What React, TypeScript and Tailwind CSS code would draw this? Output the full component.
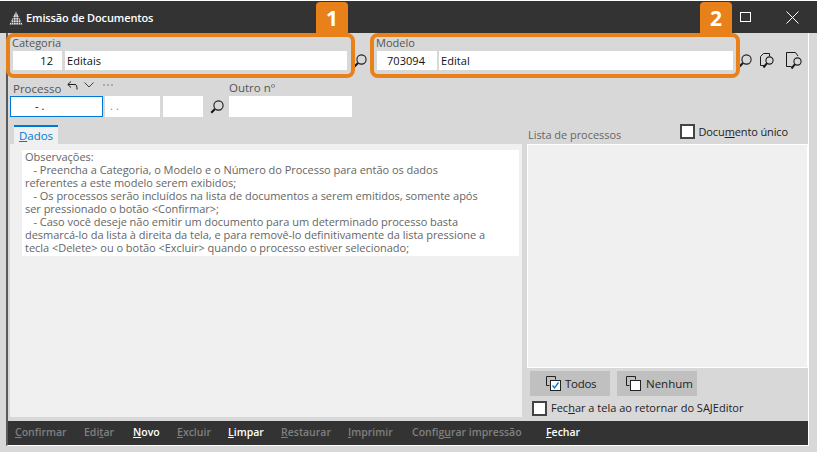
import React from "react";

const Search = ({ className = "" }: { className?: string }) => (
  <svg viewBox="0 0 14 14" className={`w-[14px] h-[14px] ${className}`} fill="none" stroke="#1a1a1a">
    <circle cx="8.5" cy="5.5" r="4.6" strokeWidth="1.1" />
    <path d="M5 9 L1.2 12.8" strokeWidth="2.2" />
  </svg>
);

const Field = ({ w, label, align }: { w: string; label?: string; align?: string }) => (
  <div className={`${w} ${align ?? ""} h-[19px] bg-white flex items-center px-[2px] text-[11px] tracking-[0.05px] text-[#111] leading-none`}>
    {label}
  </div>
);

const Check = () => <div className="w-[15px] h-[15px] bg-white border-2 border-[#444] shrink-0" />;

const Item = ({ on, className, before, u, after }: { on?: boolean; className: string; before?: string; u: string; after: string }) => (
  <span className={`${className} font-semibold whitespace-nowrap ${on ? "text-white" : "text-[#808080]"}`}>
    {before}
    <span className="underline">{u}</span>
    {after}
  </span>
);

const lines = [
  "Observações:",
  "   - Preencha a Categoria, o Modelo e o Número do Processo para então os dados",
  "referentes a este modelo serem exibidos;",
  "   - Os processos serão incluídos na lista de documentos a serem emitidos, somente após",
  "ser pressionado o botão <Confirmar>;",
  "   - Caso você deseje não emitir um documento para um determinado processo basta",
  "desmarcá-lo da lista à direita da tela, e para removê-lo definitivamente da lista pressione a",
  "tecla <Delete> ou o botão <Excluir> quando o processo estiver selecionado;",
];

export default function App() {
  return (
    <div className="relative w-[817px] h-[452px] overflow-hidden bg-[#d8d8d8] flex flex-col font-['Open_Sans','Noto_Sans',sans-serif] text-[11px]">
      <div className="h-px bg-white shrink-0" />
      <div className="h-[32px] shrink-0 bg-[#333333] flex items-center pl-[9px] text-white">
        <svg viewBox="0 0 14 14" className="w-[14px] h-[14px] mt-[2px]">
          <path d="M7 0.5 L13.5 13.5 H0.5 Z" fill="#e4e4e4" />
          <path d="M7 1V13.5M4.5 6V13.5M9.5 6V13.5M2.5 10V13.5M11.5 10V13.5M1 11.5H13M2.5 9H11.5M4 6.5H10" stroke="#333" strokeWidth="0.6" />
        </svg>
        <span className="ml-[3px] mt-[2px] font-semibold text-[11px] tracking-[-0.12px]">Emissão de Documentos</span>
        <div className="ml-auto w-[11px] h-[10px] border border-white mr-[35px]" />
        <svg viewBox="0 0 13 13" className="w-[13px] h-[13px] mr-[18px]" stroke="#fff" strokeWidth="1">
          <path d="M0.5 0.5L12.5 12.5M12.5 0.5L0.5 12.5" />
        </svg>
      </div>

      <div className="flex-1 ml-[6px] mr-[8px] mb-[6px] border-l-2 border-l-[#5a5a5a] border-r border-r-white border-b border-b-white flex flex-col min-h-0">
        {/* first row */}
        <div className="flex items-end h-[37px] pl-[5px] text-[#444]">
          <div className="w-[334px] shrink-0">
            <div className="text-[11px] leading-[13px] mb-[2px] text-[#555] -ml-px">Categoria</div>
            <div className="flex gap-[3px]">
              <Field w="w-[49px]" label="12" align="justify-end pr-[9px]" />
              <Field w="w-[282px]" label="Editais" />
            </div>
          </div>
          <Search className="ml-[6px] mb-[2px] shrink-0" />
          <div className="ml-[10px] w-[356px] shrink-0">
            <div className="text-[11px] leading-[13px] mb-[2px] text-[#555] -ml-px">Modelo</div>
            <div className="flex gap-[2px]">
              <Field w="w-[60px]" label="703094" align="justify-end pr-[12px]" />
              <Field w="w-[294px]" label="Edital" />
            </div>
          </div>
          <Search className="ml-[5px] mb-[2px] shrink-0" />
          <svg viewBox="0 0 17 18" className="w-[17px] h-[18px] ml-[7px] shrink-0" fill="none" stroke="#1a1a1a">
            <path d="M5.5 13.5H1.5V4.5L4.5 1.5H10.5V4" strokeWidth="1" />
            <circle cx="10.5" cy="8.5" r="3.6" strokeWidth="1.1" />
            <path d="M8 11.2L4.5 15.5" strokeWidth="2" />
          </svg>
          <svg viewBox="0 0 17 18" className="w-[17px] h-[18px] ml-[10px] shrink-0" fill="none" stroke="#1a1a1a">
            <path d="M5.5 14.5H0.5V0.5H9.5L12 4" strokeWidth="1" />
            <circle cx="11.5" cy="9.5" r="3.6" strokeWidth="1.1" />
            <path d="M9 12.2L5.5 16.5" strokeWidth="2" />
          </svg>
        </div>

        {/* second row */}
        <div className="flex items-end h-[47px] pl-[2px] shrink-0">
          <div className="w-[195px] shrink-0">
            <div className="flex items-center h-[15px] pl-[3px]">
              <span className="text-[11.5px] text-[#555] mt-[2px]">Processo</span>
              <svg viewBox="0 0 11 9" className="w-[11px] h-[9px] ml-[6px] -mt-[5px]" fill="none" stroke="#1a1a1a" strokeWidth="1">
                <path d="M4 0.5L0.8 3.5L4 6.5M1 3.5H8C9.5 3.5 10 5 10 8.5" />
              </svg>
              <svg viewBox="0 0 10 6" className="w-[10px] h-[6px] ml-[6px] -mt-[5px]" fill="none" stroke="#1a1a1a" strokeWidth="0.8">
                <path d="M0.5 0.5L5 5L9.5 0.5" />
              </svg>
              <span className="ml-[9px] -mt-[5px] flex gap-[2px]">
                <i className="w-[2px] h-[2px] bg-[#aaa]" />
                <i className="w-[2px] h-[2px] bg-[#aaa]" />
                <i className="w-[2px] h-[2px] bg-[#aaa]" />
              </span>
            </div>
            <div className="flex gap-[2px] h-[21px] mt-px">
              <div className="w-[93px] bg-white border border-[#0078d7] flex items-center pl-[24px] text-[11px] text-[#111]">-&nbsp;.</div>
              <div className="w-[55px] bg-white flex items-center pl-[5px] text-[11px] text-[#8a8a8a] tracking-[3px] mr-px">..</div>
              <div className="w-[40px] bg-white" />
            </div>
          </div>
          <Search className="ml-[5px] mb-[3px] shrink-0" />
          <div className="ml-[5px] w-[123px]">
            <div className="h-[15px] mb-px text-[11.5px] text-[#555] leading-[14px] pt-[1px]">Outro nº</div>
            <div className="h-[21px] bg-white" />
          </div>
        </div>

        {/* body */}
        <div className="flex-1 flex min-h-0 mt-[8px] pl-[2px]">
          <div className="w-[512px] shrink-0 flex flex-col">
            <div className="ml-[4px] w-[44px] h-[19px] bg-[#f0f0f0] border-t-2 border-t-[#0078d7] flex items-center justify-center text-[#0078d7] text-[11.5px] leading-none">
              <span><span className="underline">D</span>ados</span>
            </div>
            <div className="h-[273px] bg-[#f0f0f0] pt-[6px] px-[12px] pr-[3px]">
              <div className="bg-white h-[106px] pl-[3px] text-[11px] leading-[13px] text-[#666] tracking-[-0.03px] whitespace-pre">
                {lines.map((l) => (
                  <div key={l}>{l}</div>
                ))}
              </div>
            </div>
          </div>
          <div className="ml-[5px] flex-1 flex flex-col">
            <div className="h-[19px] flex items-end relative">
              <span className="text-[#666] leading-[14px] mb-[2px] ml-px tracking-[-0.05px]">Lista de processos</span>
              <div className="ml-auto mr-[20px] mb-[4px] flex items-center text-[#222] gap-[4px]">
                <Check />
                <span className="tracking-[-0.12px]">Docu<span className="underline">m</span>ento único</span>
              </div>
            </div>
            <div className="h-[224px] bg-[#f0f0f0] border border-white" />
            <div className="flex gap-[7px] mt-[3px] ml-[3px]">
              <div className="w-[80px] h-[25px] bg-[#c0c0c0] flex items-center pl-[16px] gap-[4px] text-[#222] text-[11.5px]">
                <svg viewBox="0 0 15 15" className="w-[15px] h-[15px]" fill="none" stroke="#222">
                  <path d="M9.5 3.5V0.5H0.5V9.5H3.5" />
                  <rect x="4.5" y="4.5" width="10" height="10" fill="#fff" />
                  <path d="M6.5 9.5L8.5 12L12.5 6.5" stroke="#0078d7" strokeWidth="1.3" />
                </svg>
                <span className="tracking-[-0.3px]">Todos</span>
              </div>
              <div className="w-[80px] h-[25px] bg-[#c0c0c0] flex items-center pl-[9px] gap-[5px] text-[#222] text-[11.5px]">
                <svg viewBox="0 0 15 15" className="w-[15px] h-[15px]" fill="none" stroke="#222">
                  <path d="M9.5 3.5V0.5H0.5V9.5H3.5" />
                  <rect x="4.5" y="4.5" width="10" height="10" fill="#fff" />
                </svg>
                <span>Nenhum</span>
              </div>
            </div>
            <div className="flex items-center gap-[4px] mt-[4px] ml-[5px] text-[#222] whitespace-nowrap">
              <Check />
              <span>Fec<span className="underline">h</span>ar a tela ao retornar do SAJEditor</span>
            </div>
          </div>
        </div>

        {/* bottom bar */}
        <div className="h-[24px] shrink-0 bg-[#333333] flex items-center text-[10.5px]">
          <Item className="ml-[7px] w-[69px]" u="C" after="onfirmar" />
          <Item className="w-[49px]" before="Edi" u="t" after="ar" />
          <Item className="w-[44px]" on u="N" after="ovo" />
          <Item className="w-[51px]" u="E" after="xcluir" />
          <Item className="w-[53px]" on u="L" after="impar" />
          <Item className="w-[67px]" u="R" after="estaurar" />
          <Item className="w-[64px]" u="I" after="mprimir" />
          <Item className="w-[134px]" before="Config" u="u" after="rar impressão" />
          <Item on u="F" after="echar" className="" />
        </div>
      </div>

      {/* annotations */}
      <div className="absolute left-[6px] top-[33px] w-[349px] h-[45px] border-4 border-[#e8811a] rounded-[8px]" />
      <div className="absolute left-[370px] top-[33px] w-[370px] h-[45px] border-4 border-[#e8811a] rounded-[8px]" />
      <div className="absolute left-[316px] top-[2px] w-[32px] h-[32px] bg-[#e8811a] rounded-t-[4px] flex items-center justify-center text-white font-bold text-[21px] leading-none">1</div>
      <div className="absolute left-[700px] top-[2px] w-[32px] h-[32px] bg-[#e8811a] rounded-t-[4px] flex items-center justify-center text-white font-bold text-[21px] leading-none">2</div>
    </div>
  );
}
